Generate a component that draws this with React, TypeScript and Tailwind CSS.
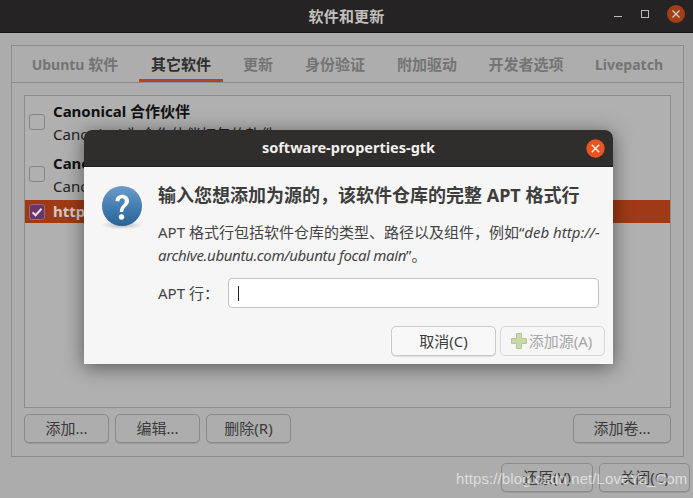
import React from "react";

const font = { fontFamily: '"Noto Sans", "Noto Sans CJK SC", sans-serif' };

function Btn({ children, className }: { children: React.ReactNode; className: string }) {
  return (
    <div className={"h-[29px] flex items-center justify-center rounded-[5px] border border-[#8a8a8a] bg-[#adadad] text-[#3a3a3a] text-[15px] shadow-[0_1px_0_#9a9a9a] " + className}>
      {children}
    </div>
  );
}

function Check({ checked }: { checked?: boolean }) {
  return (
    <div className={"w-[16px] h-[16px] rounded-[3px] border flex items-center justify-center shrink-0 " + (checked ? "bg-[#6b3568] border-[#8d6a86]" : "bg-[#b0b0b0] border-[#848484]")}>
      {checked && (
        <svg width="12" height="12" viewBox="0 0 12 12" fill="none">
          <path d="M1.5 6.2 L4.6 9.2 L10.5 2.8" stroke="#e8e0e6" strokeWidth="2" />
        </svg>
      )}
    </div>
  );
}

function Tab({ children, active, className }: { children: React.ReactNode; active?: boolean; className: string }) {
  return (
    <div className={"h-[36px] flex items-center justify-center text-[15px] font-bold whitespace-nowrap " + (active ? "text-[#2f2f2f] border-b-[3px] border-[#b8421c] pt-[3px] " : "text-[#747474] ") + className}>
      {children}
    </div>
  );
}

export default function App() {
  return (
    <div className="relative w-[693px] h-[498px] overflow-hidden bg-[#acacac]" style={font}>
      <div className="h-[33px] bg-[#252323] border-b border-[#141313] relative flex items-center justify-center text-[#c2c0bd] text-[15px] font-bold">
        <span className="tracking-[0.2px]">软件和更新</span>
        <div className="absolute left-[607px] top-0 h-[32px] flex items-center">
          <svg width="80" height="32" viewBox="0 0 80 32" fill="none">
            <path d="M7 16.5 H15" stroke="#bdbbb8" strokeWidth="1" />
            <rect x="34.5" y="10.5" width="7" height="7" stroke="#bdbbb8" strokeWidth="1" />
            <circle cx="69" cy="14" r="9" fill="#a43e17" />
            <path d="M65.5 10.5 L72.5 17.5 M72.5 10.5 L65.5 17.5" stroke="#d6cfca" strokeWidth="1.3" />
          </svg>
        </div>
      </div>
      <div className="ml-[11px] mt-[12px] w-[673px] h-[412px] border border-[#8c8c8c] flex flex-col bg-[#adadad]">
        <div className="h-[36px] border-b border-[#8c8c8c] box-content flex pl-[1px]">
          <Tab className="w-[126px] pr-[2px]"><span className="text-[14px]">Ubuntu</span>&nbsp;软件</Tab>
          <Tab active className="w-[84px]">其它软件</Tab>
          <Tab className="w-[70px]">更新</Tab>
          <Tab className="w-[84px]">身份验证</Tab>
          <Tab className="w-[100px]">附加驱动</Tab>
          <Tab className="w-[98px]">开发者选项</Tab>
          <Tab className="w-[108px]"><span className="text-[14px]">Livepatch</span></Tab>
        </div>
        <div className="flex-1 flex flex-col px-[12px] pt-[12px]">
          <div className="h-[313px] border border-[#8c8c8c] bg-[#b0b0b0] flex flex-col text-[#111]">
            <div className="h-[52px] flex items-center pl-[4px]">
              <Check />
              <div className="pl-[8px]">
                <div className="text-[15px] font-bold leading-[24px]">Canonical 合作伙伴</div>
                <div className="text-[15px] leading-[22px] text-[#222]">Canonical 为合作伙伴打包的软件</div>
              </div>
            </div>
            <div className="h-[52px] flex items-center pl-[4px]">
              <Check />
              <div className="pl-[8px]">
                <div className="text-[15px] font-bold leading-[24px]">Canonical 合作伙伴</div>
                <div className="text-[15px] leading-[22px] text-[#222]">Canonical 合作伙伴</div>
              </div>
            </div>
            <div className="h-[23px] flex items-center pl-[4px] bg-[#a03a16]">
              <Check checked />
              <div className="pl-[8px] text-[15px] font-bold text-[#cfcac6]">http://archive.ubuntu.com/ubuntu focal main</div>
            </div>
          </div>
          <div className="flex gap-[6px] mt-[6px]">
            <Btn className="w-[85px]">添加...</Btn>
            <Btn className="w-[85px]">编辑...</Btn>
            <Btn className="w-[85px]">删除(R)</Btn>
            <Btn className="w-[98px] ml-auto">添加卷...</Btn>
          </div>
        </div>
      </div>
      <div className="flex justify-end gap-[6px] mt-[6px] pr-[3px]">
        <Btn className="w-[92px]">还原(V)</Btn>
        <Btn className="w-[91px]">关闭(C)</Btn>
      </div>

      {/* Dialog */}
      <div className="absolute left-[84px] top-[130px] w-[529px] h-[234px] rounded-t-[8px] bg-[#f6f6f6] shadow-[0_3px_20px_rgba(0,0,0,0.5)] flex flex-col">
        <div className="h-[37px] rounded-t-[8px] bg-[#302d2d] border-b border-[#1f1d1d] relative flex items-center justify-center text-[#f2f0ee] text-[14.5px] font-bold">
          software-properties-gtk
          <svg className="absolute left-[502px] top-[9px]" width="19" height="19" viewBox="0 0 19 19" fill="none">
            <circle cx="9.5" cy="9.5" r="9.2" fill="#e95420" />
            <path d="M5.8 5.8 L13.2 13.2 M13.2 5.8 L5.8 13.2" stroke="#fbeee8" strokeWidth="1.5" />
          </svg>
        </div>
        <div className="flex pl-[17px] pt-[15px] text-[#3d3d3d]">
          <div className="w-[42px] shrink-0 pt-[4px]">
            <svg width="42" height="44" viewBox="0 0 42 44">
              <defs>
                <radialGradient id="s" cx="50%" cy="50%" r="50%">
                  <stop offset="0%" stopColor="#000" stopOpacity="0.25" />
                  <stop offset="100%" stopColor="#000" stopOpacity="0" />
                </radialGradient>
                <linearGradient id="b" x1="0" y1="0" x2="0" y2="1">
                  <stop offset="0%" stopColor="#6b9cc9" />
                  <stop offset="60%" stopColor="#3e78ad" />
                  <stop offset="100%" stopColor="#2a6396" />
                </linearGradient>
              </defs>
              <ellipse cx="21" cy="39" rx="21" ry="4.5" fill="url(#s)" />
              <circle cx="21" cy="20" r="20" fill="url(#b)" />
              <path d="M14.5 15 C14.5 6.5 28 6.5 28 15 C28 20 22.3 20.5 22.3 26 H18.8 C18.8 19.5 23.8 19 23.8 15 C23.8 11 18.3 11.3 18.3 15.5 Z" fill="#fff" />
              <circle cx="20.5" cy="31" r="2.7" fill="#fff" />
            </svg>
          </div>
          <div className="pl-[15px] w-[463px]">
            <div className="text-[18px] font-bold leading-[26px] whitespace-nowrap text-[#3d3d3d]">输入您想添加为源的，该软件仓库的完整 APT 格式行</div>
            <div className="mt-[13px] text-[15px] leading-[23px] text-[#444]">
              <div className="whitespace-nowrap">APT 格式行包括软件仓库的类型、路径以及组件，例如“<i>deb http://-</i></div>
              <div className="whitespace-nowrap"><i className="tracking-[-0.35px]">archive.ubuntu.com/ubuntu focal main</i>”。</div>
            </div>
            <div className="flex items-center mt-[11px]">
              <span className="w-[70px] text-[15px] text-[#444] whitespace-nowrap">APT 行：</span>
              <div className="w-[371px] h-[30px] rounded-[4px] border border-[#cdbfbf] bg-white flex items-center pl-[9px]">
                <div className="w-[1px] h-[15px] bg-[#222]" />
              </div>
            </div>
          </div>
        </div>
        <div className="flex justify-end gap-[4px] pr-[8px] mt-[18px]">
          <div className="w-[105px] h-[30px] rounded-[5px] border border-[#c9c9c9] bg-[#f8f8f8] flex items-center justify-center text-[15px] text-[#3d3d3d] shadow-[0_1px_0_#dcdcdc]">取消(C)</div>
          <div className="w-[105px] h-[30px] rounded-[5px] border border-[#d6d6d6] bg-[#f6f6f6] flex items-center justify-center text-[15px] text-[#a6a6a6]">
            <svg width="16" height="16" viewBox="0 0 16 16" className="mr-[2px] -ml-[2px]">
              <path d="M5.5 0.5 H10.5 V5.5 H15.5 V10.5 H10.5 V15.5 H5.5 V10.5 H0.5 V5.5 H5.5 Z" fill="#c8d8a8" stroke="#b4c692" strokeWidth="1" />
            </svg>
            添加源(A)
          </div>
        </div>
      </div>

      {/* Watermark */}
      <div className="absolute left-[456px] top-[470px] text-[15px] leading-[18px] text-white/60 whitespace-nowrap tracking-[0.1px]" style={{ fontFamily: '"Liberation Sans", sans-serif' }}>
        https://blog.csdn.net/LoveYa_Com
      </div>
    </div>
  );
}
